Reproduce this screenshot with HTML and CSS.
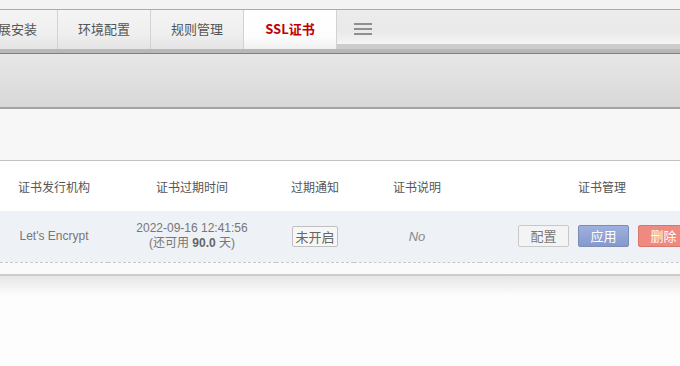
FILE: index.html
```html
<html lang="zh-CN">
  <head>
    <title>SSL证书</title>
    <meta charset="utf-8">
    <meta name="viewport" content="width=device-width, initial-scale=1.0">
    <link rel="stylesheet" href="styles.css">
  </head>
  <body>
    <div class="topline"></div>

    <div class="tabbar">
      <ul class="tabs">
        <li class="tab">扩展安装</li>
        <li class="tab">环境配置</li>
        <li class="tab">规则管理</li>
        <li class="tab tab--active">SSL证书</li>
      </ul>
      <div class="menu">
        <span></span><span></span><span></span>
      </div>
    </div>
    <div class="tabbar__edge"></div>

    <div class="toolbar"></div>
    <div class="panel"></div>

    <div class="list">
      <table class="certs">
        <colgroup>
          <col style="width:108px">
          <col style="width:168px">
          <col style="width:78px">
          <col style="width:126px">
          <col style="width:244px">
        </colgroup>
        <thead>
          <tr>
            <th>证书发行机构</th>
            <th>证书过期时间</th>
            <th>过期通知</th>
            <th>证书说明</th>
            <th>证书管理</th>
          </tr>
        </thead>
        <tbody>
          <tr>
            <td>Let's Encrypt</td>
            <td class="date">2022-09-16 12:41:56<br>(还可用 <b>90.0</b> 天)</td>
            <td><span class="btn btn--notice">未开启</span></td>
            <td class="note">No</td>
            <td>
              <div class="actions">
                <span class="btn btn--plain">配置</span>
                <span class="btn btn--apply">应用</span>
                <span class="btn btn--delete">删除</span>
              </div>
            </td>
          </tr>
        </tbody>
      </table>
    </div>
    <div class="list__foot"></div>
    <div class="shadow"></div>
  </body>
</html>
```

FILE: styles.css
```css
html, body {
  margin: 0;
  padding: 0;
}

body {
  width: 680px;
  height: 366px;
  overflow: hidden;
  background-color: #fdfdfd;
  font-family: "Liberation Sans", Arial, "Noto Sans CJK SC", sans-serif;
}

.topline {
  height: 9px;
  background-color: #f3f3f3;
  border-bottom: 1px solid #ababab;
}

.tabbar {
  display: flex;
  height: 39px;
  background: linear-gradient(#ececec, #e9e9e9 55%, #f5f5f5 88%, #cccccc 88%);
}

.tabs {
  display: flex;
  list-style-type: none;
  margin: 0 0 0 -35px;
  padding: 0;
}

.tab {
  width: 92px;
  height: 39px;
  line-height: 38px;
  text-align: center;
  font-family: "Noto Sans CJK SC", sans-serif;
  font-size: 13px;
  color: #555;
  border-right: 1px solid #d2d2d2;
  background: linear-gradient(#f4f4f4, #efefef 60%, #e4e4e4);
}

.tab--active {
  color: #c00000;
  font-weight: bold;
  background: linear-gradient(#ffffff, #fdfdfd 70%, #f0f0f0);
}

.menu {
  display: flex;
  flex-direction: column;
  gap: 3px;
  margin: 13px 0 0 17px;
}

.menu span {
  display: block;
  width: 18px;
  height: 2px;
  background-color: #8f8f8f;
}

.tabbar__edge {
  height: 4px;
  background-color: #b8b8b8;
  border-bottom: 1px solid #808080;
}

.toolbar {
  height: 53px;
  background: linear-gradient(#e7e7e7, #d8d8d8);
  border-bottom: 2px solid #a2a2a2;
}

.panel {
  height: 51px;
  background-color: #f7f7f7;
  border-bottom: 1px solid #c2c2c2;
}

.list {
  background-color: #fff;
}

.certs {
  width: 724px;
  table-layout: fixed;
  border-collapse: collapse;
}

.certs th {
  height: 50px;
  padding: 0;
  font-family: "Noto Sans CJK SC", sans-serif;
  font-size: 12px;
  font-weight: normal;
  color: #555;
  text-align: center;
}

.certs td {
  height: 51px;
  padding: 0;
  font-size: 12px;
  line-height: 15px;
  color: #777;
  text-align: center;
  background-color: #eef1f6;
  border-bottom: 1px dashed #c8c8c8;
}

.date b {
  color: #666;
}

.note {
  font-style: italic;
  font-size: 13px !important;
  color: #888 !important;
}

.actions {
  display: flex;
  justify-content: center;
  gap: 9px;
  padding-left: 3px;
}

.btn {
  display: inline-block;
  box-sizing: border-box;
  font-family: "Noto Sans CJK SC", sans-serif;
  font-size: 13px;
  text-align: center;
  border-radius: 2px;
}

.btn--notice {
  width: 46px;
  height: 21px;
  line-height: 19px;
  color: #666;
  background-color: #f7f7f7;
  border: 1px solid #c0c0c0;
}

.btn--plain,
.btn--apply,
.btn--delete {
  width: 51px;
  height: 22px;
  line-height: 20px;
}

.btn--plain {
  color: #777;
  background-color: #f4f4f4;
  border: 1px solid #c8c8c8;
}

.btn--apply {
  color: #fff;
  background: linear-gradient(#9db0df, #8699cd);
  border: 1px solid #7d8cb3;
}

.btn--delete {
  color: #fff;
  background-color: #ee8a80;
  border: 1px solid #d9776c;
}

.list__foot {
  height: 11px;
  background-color: #fafafa;
  border-bottom: 2px solid #cccccc;
}

.shadow {
  height: 20px;
  background: linear-gradient(#e6e6e6, #fdfdfd);
}
```
